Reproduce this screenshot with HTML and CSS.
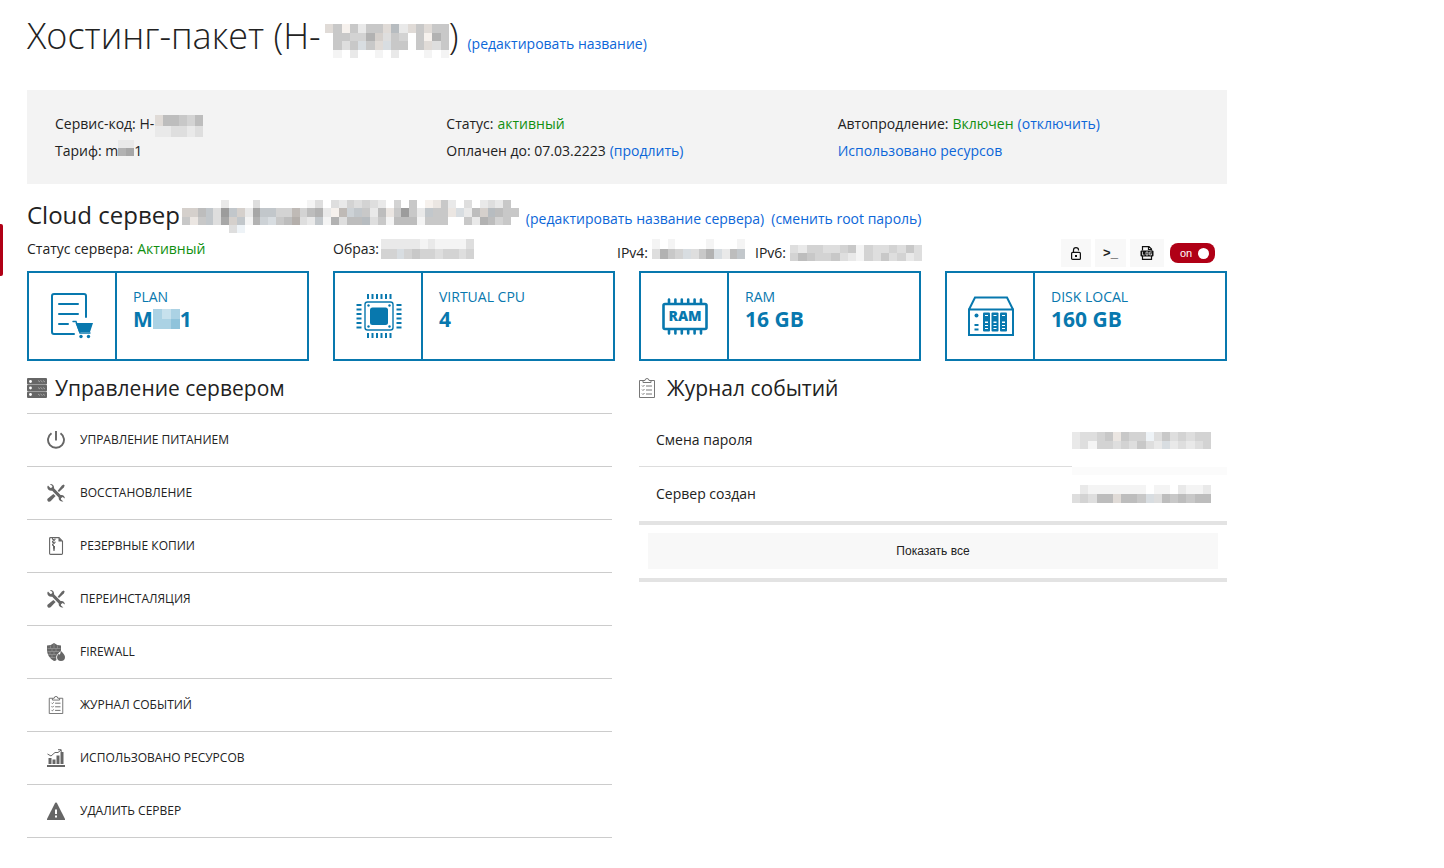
FILE: index.html
```html
<!DOCTYPE html>
<html lang="ru">
<head>
<meta charset="utf-8">
<title>Хостинг-пакет</title>
<link rel="stylesheet" href="styles.css">
</head>
<body>
<svg class="sprite" aria-hidden="true">
  <symbol id="tools" viewBox="0 0 18 18">
    <path d="M1 1.6 3.4 4 5 3.4 5.4 2 3 .2C5 -.3 7.500 1.200 7 4.300L13.600 11C16 10.400 18 12.200 17.900 14.600L15.600 13 14 14.200 14 15.600 16.400 17.400C14 18.200 11.200 16.300 11.700 13.400L5.200 6.700C2.500 7.300.2 5.200.3 2.800Z"/>
    <path d="M16.600.4 17.700 1.500 16.800 3.500 12 8 10.700 6.700 14.900 1.500Z"/>
    <path d="M6.400 9.900 8.600 12.100 3.600 17.300Q2.200 18.300.9 17.200-.3 15.900.8 14.600Z"/>
  </symbol>
  <symbol id="clipboard" viewBox="0 0 16 20">
    <g fill="none" stroke="currentColor" stroke-width="1">
      <path d="M4 2.500H.5V19.500H15.500V2.500H12"/>
      <path d="M4 4.500V2.500H6Q6 .5 8 .5T10 2.500H12V4.500Z"/>
      <path d="M7 8H13M7 12H13M7 16H13M3 7.500 4 8.500 5.500 7M3 11.500 4 12.500 5.500 11M3 15.500 4 16.500 5.500 15"/>
    </g>
  </symbol>
</svg>

<div class="side-tab"></div>

<main class="page">
  <header class="title">
    <h1 class="title-text">Хостинг-пакет (H-<span class="mosaic mosaic-title" data-cells="d5b5255dG2d5d55/055447e35405b75/0535D5dD5505d35/010200102000101"></span>)</h1>
    <a class="link" href="#">(редактировать название)</a>
  </header>

  <section class="info">
    <div>
      <p class="info-line">Сервис-код: H-<span class="mosaic mosaic-code" data-cells="d66546/223323"></span></p>
      <p class="info-line">Тариф: m<span class="mosaic mosaic-tariff" data-cells="22/78"></span>1</p>
    </div>
    <div>
      <p class="info-line">Статус: <span class="good">активный</span></p>
      <p class="info-line">Оплачен до: 07.03.2223 <a class="link" href="#">(продлить)</a></p>
    </div>
    <div>
      <p class="info-line">Автопродление: <span class="good">Включен</span> <a class="link" href="#">(отключить)</a></p>
      <p class="info-line"><a class="link" href="#">Использовано ресурсов</a></p>
    </div>
  </section>

  <section class="server-head">
    <h2 class="server-name">Cloud сервер <span class="mosaic mosaic-server" data-cells="0000020003000000130324343204050bc520302325/ee6F39Fe28FF44g4672bgEF526c5952F55cD26eG655/5c5F38eF17ED56h32F17366G351666155500527645/0000003B"></span></h2>
    <a class="link" href="#">(редактировать название сервера)</a>
    <a class="link" href="#">(сменить root пароль)</a>
  </section>

  <section class="status">
    <p class="status-state">Статус сервера: <span class="good">Активный</span></p>
    <p class="status-image">Образ: <span class="mosaic mosaic-image" data-cells="222221211113/44D454434434"></span></p>
    <p class="status-ip">IPv4: <span class="mosaic mosaic-ip4" data-cells="101000010001/3754D357D26F"></span></p>
    <p class="status-ip">IPv6: <span class="mosaic mosaic-ip6" data-cells="3244334514334353/4654453214353423"></span></p>
    <div class="actions">
      <button class="tool" type="button" aria-label="Доступ">
        <svg viewBox="0 0 10 13" width="10" height="13"><g fill="none" stroke="#111" stroke-width="1.200"><rect x=".6" y="5.400" width="8.800" height="7" rx="1"/><path d="M2.500 5.400V3Q2.500.6 5 .6T7.500 2.800V3.500"/></g><rect x="4" y="8" width="2" height="2" fill="#111"/></svg>
      </button>
      <button class="tool tool-console" type="button">&gt;_</button>
      <button class="tool tool-log" type="button" aria-label="Журнал">
        <svg viewBox="0 0 14 14" width="14" height="14"><path d="M2.500 4.500V.6H9L11.500 3V4.500M8.500.6V3.500H11.500M2.500 10V13.400H11.500V10" fill="none" stroke="#111" stroke-width="1.200"/><rect x=".5" y="4.500" width="13" height="6" rx="1" fill="#111"/><path d="M2.500 5.700V9H4.500M6 6H8V9H6ZM11.800 6H9.700V9H11.500V7.700H10.700" fill="none" stroke="#fff" stroke-width=".7"/></svg>
      </button>
      <label class="toggle"><input class="toggle-input" type="checkbox" checked><span>on</span><span class="toggle-knob"></span></label>
    </div>
  </section>

  <section class="cards">
    <article class="card">
      <div class="card-icon">
        <svg viewBox="0 0 46 46" width="46" height="46"><g fill="none" stroke="currentColor" stroke-width="2" stroke-linecap="round"><path d="M24 41H4Q2 41 2 39V3Q2 1 4 1H34Q36 1 36 3V24"/><path d="M9 11H28M9 21H28M9 31H18"/><path d="M23 28.500H26L30 40H40" stroke-width="1.400"/></g><path d="M25.500 30H43L40 39H29Z" fill="currentColor"/><circle cx="31" cy="43.500" r="1.700" fill="currentColor"/><circle cx="38.500" cy="43.500" r="1.700" fill="currentColor"/></svg>
      </div>
      <div class="card-body"><p class="card-label">PLAN</p><p class="card-value">M<span class="mosaic mosaic-plan" data-tone="blue" data-cells="323/334"></span>1</p></div>
    </article>
    <article class="card">
      <div class="card-icon">
        <svg viewBox="0 0 46 46" width="46" height="46"><g fill="none" stroke="currentColor"><path stroke-width="5" stroke-dasharray="2 2.500" d="M11 3.500H36M11 42.500H36M3 11V36M43 11V36"/><rect x="9" y="9" width="28" height="28" rx="2.500" stroke-width="1.400"/></g><rect x="14" y="14.500" width="18" height="17.500" rx="2.500" fill="currentColor"/><g fill="currentColor"><circle cx="12.500" cy="12.500" r="1.200"/><circle cx="33.500" cy="12.500" r="1.200"/><circle cx="12.500" cy="33.500" r="1.200"/><circle cx="33.500" cy="33.500" r="1.200"/></g></svg>
      </div>
      <div class="card-body"><p class="card-label">VIRTUAL CPU</p><p class="card-value">4</p></div>
    </article>
    <article class="card">
      <div class="card-icon">
        <svg viewBox="0 0 46 46" width="46" height="46"><g fill="none" stroke="currentColor"><rect x="1.500" y="11" width="43" height="25" rx="1.500" stroke-width="2.600"/><path stroke-width="2.600" stroke-linecap="round" d="M7 6.500V10M13.400 6.500V10M19.800 6.500V10M26.200 6.500V10M32.600 6.500V10M39 6.500V10M7 37V40.500M13.400 37V40.500M19.800 37V40.500M26.200 37V40.500M32.600 37V40.500M39 37V40.500"/></g><text class="ram-text" x="23" y="28" text-anchor="middle">RAM</text></svg>
      </div>
      <div class="card-body"><p class="card-label">RAM</p><p class="card-value">16 GB</p></div>
    </article>
    <article class="card">
      <div class="card-icon">
        <svg viewBox="0 0 46 46" width="46" height="46"><g fill="none" stroke="currentColor" stroke-width="2"><path d="M1 16.500H45V42H1ZM1 16.500 7 4.500H39L45 16.500"/></g><g fill="currentColor"><circle cx="8.500" cy="22.500" r="2"/><rect x="6.500" y="31" width="4" height="2"/><rect x="6.500" y="35.500" width="4" height="2"/><rect x="15" y="19.500" width="7" height="19" rx="1"/><rect x="23.500" y="19.500" width="7" height="19" rx="1"/><rect x="32" y="19.500" width="7" height="19" rx="1"/></g><g fill="#fff"><path d="M17 22H20V23H17ZM25.500 22H28.500V23H25.500ZM34 22H37V23H34ZM17 28.500H20V30H17ZM25.500 28.500H28.500V30H25.500ZM34 28.500H37V30H34ZM17 32H20V33H17ZM25.500 32H28.500V33H25.500ZM34 32H37V33H34ZM17 35H20V36H17ZM25.500 35H28.500V36H25.500ZM34 35H37V36H34Z"/></g></svg>
      </div>
      <div class="card-body"><p class="card-label">DISK LOCAL</p><p class="card-value">160 GB</p></div>
    </article>
  </section>

  <div class="columns">
    <section>
      <h2 class="section-title">
        <svg viewBox="0 0 20 20" width="20" height="20"><g fill="#666"><rect width="20" height="6.400" rx="1"/><rect y="6.800" width="20" height="6.400" rx="1"/><rect y="13.600" width="20" height="6.400" rx="1"/></g><g fill="#fff"><circle cx="3.500" cy="3.500" r="1.400"/><circle cx="3.500" cy="10" r="1.400"/><circle cx="3.500" cy="16.500" r="1.400"/></g><path d="M11 2.500 13 4M13.500 2.500 15.500 4M16 2.500 18 4M11 9.500 13 11M13.500 9.500 15.500 11M16 9.500 18 11M11 16 13 17.500M13.500 16 15.500 17.500M16 16 18 17.500" stroke="#bbb" stroke-width=".7"/></svg>
        Управление сервером
      </h2>
      <ul class="menu">
        <li><a class="menu-link" href="#"><svg width="18" height="18" viewBox="0 0 18 18"><path d="M4.500 2.200A8 8 0 1 0 13.500 2.200M9 0V9.500" fill="none" stroke="currentColor" stroke-width="1.900"/></svg>Управление питанием</a></li>
        <li><a class="menu-link" href="#"><svg width="18" height="18" fill="currentColor"><use href="#tools"/></svg>Восстановление</a></li>
        <li><a class="menu-link" href="#"><svg width="18" height="18" viewBox="0 0 18 18"><path d="M2.600 1.500Q2.600.6 3.500.6H12L15.500 4.200V16.500Q15.500 17.400 14.600 17.400H3.500Q2.600 17.400 2.600 16.500Z" fill="none" stroke="currentColor" stroke-width="1.100"/><path d="M11.500.6V4.500H15.500Z" fill="currentColor"/><path d="M5.500 1V2.500H7V4H5.500V5.500H7V7H5.500V8.500H7M8 1.500V3H6.500M8 4.500V6H6.500" fill="none" stroke="currentColor" stroke-width="1"/><path d="M6 9H8V11L7.500 14H6.500L6 11Z" fill="currentColor"/></svg>Резервные копии</a></li>
        <li><a class="menu-link" href="#"><svg width="18" height="18" fill="currentColor"><use href="#tools"/></svg>Переинсталяция</a></li>
        <li><a class="menu-link" href="#"><svg width="18" height="18" viewBox="0 0 18 18" fill="currentColor"><path d="M0 2.500Q4 2.500 7 0 10 2.500 14 2.500V7.500Q10.500 11 9.300 13 9 15.500 9.500 17Q8.500 18 7 18 0 14 0 7Z"/><path d="M13.500 7.500Q18 11.500 18 14 18 18 14 18T10 14Q10 12 12 10.500L12.500 12Q14 10 13.500 7.500Z"/><path d="M.5 5.500H13.500M.5 8.500H12M1 11.500H9.500M3 14.500H8.500M3.500 2.500V5.500M7 1V5.500M10.500 2.500V5.500M5 5.500V8.500M9 5.500V8.500M3 8.500V11.500M7 8.500V11.500M5 11.500V14.500" stroke="#aaa" stroke-width=".5"/></svg>Firewall</a></li>
        <li><a class="menu-link" href="#"><svg width="18" height="18"><use href="#clipboard"/></svg>Журнал событий</a></li>
        <li><a class="menu-link" href="#"><svg width="18" height="18" viewBox="0 0 18 18" fill="currentColor"><path d="M0 16H18V18H0ZM1.500 9H4.500V15H1.500ZM5.500 10.500H8.500V15H5.500ZM9.500 6.500H12.500V15H9.500ZM13.500 3H16.500V15H13.500Z"/><path d="M.5 5 4 7 8 3.500H11L14 1M11 .7H14.200V3" fill="none" stroke="currentColor" stroke-width="1"/></svg>Использовано ресурсов</a></li>
        <li><a class="menu-link" href="#"><svg width="18" height="18" viewBox="0 0 18 18"><path d="M8.200.8Q9 0 9.800.8L18 17V18H0V17Z" fill="currentColor"/><path d="M8 7.500H10V12H8ZM8 13.500H10V15.500H8Z" fill="#fff"/></svg>Удалить сервер</a></li>
      </ul>
    </section>

    <section>
      <h2 class="section-title section-title-log">
        <svg class="ico-log" width="16" height="20"><use href="#clipboard"/></svg>
        Журнал событий
      </h2>
      <table class="events">
        <tbody>
          <tr><td class="event-name event-first">Смена пароля</td><td class="event-date"><span class="mosaic mosaic-date" data-cells="23345c544B3534344/23144343532D23234"></span></td></tr>
          <tr><td class="event-name">Сервер создан</td><td class="event-date event-smudge"><span class="mosaic mosaic-date-tall" data-cells="02111111101102112/34366d665D3656566"></span></td></tr>
        </tbody>
      </table>
      <div class="events-more"><button class="more" type="button">Показать все</button></div>
    </section>
  </div>
</main>
<script src="script.js"></script>
</body>
</html>
```
FILE: styles.css
```css
* {
  box-sizing: border-box;
}

body {
  margin: 0;
  background: #fff;
  color: #222;
  font: 14px/20px "Open Sans", "Noto Sans", sans-serif;
}

h1,
h2,
p,
ul {
  margin: 0;
  padding: 0;
  font-weight: 400;
}

button {
  border: 0;
  padding: 0;
  background: #f8f8f8;
  color: #222;
}

.sprite {
  display: none;
}

.side-tab {
  position: fixed;
  left: 0;
  top: 224px;
  width: 3px;
  height: 52px;
  background: #b00016;
  border-radius: 0 2px 2px 0;
}

.page {
  max-width: 1227px;
  padding-left: 27px;
}

.link {
  color: #0c66d8;
  text-decoration: none;
}

.good {
  color: #0f8f0f;
}

.mosaic {
  display: inline-block;
  vertical-align: middle;
}

.mosaic svg {
  display: block;
  width: 100%;
  height: 100%;
}

.title {
  display: flex;
  align-items: baseline;
  gap: 9px;
  padding: 10px 0 28px;
}

.title-text {
  display: flex;
  align-items: center;
  font-size: 36px;
  line-height: 52px;
  font-weight: 300;
}

.mosaic-title {
  width: 124px;
  height: 34px;
  margin: 10px 0 0 4px;
}

.info {
  display: grid;
  grid-template-columns: repeat(3, 1fr);
  gap: 2px;
  padding: 20px 0 20px 28px;
  background: #f3f3f3;
}

.info-line {
  display: flex;
  align-items: center;
  gap: 0 4px;
  line-height: 27px;
}

.mosaic-code {
  width: 48px;
  height: 22px;
  margin: 5px 0 0 -3px;
}

.mosaic-tariff {
  width: 16px;
  height: 16px;
  margin: 0 -4px 6px;
}

.server-head {
  display: flex;
  align-items: baseline;
  gap: 7px;
  padding-top: 13px;
}

.server-name {
  display: flex;
  align-items: center;
  gap: 2px;
  font-size: 24px;
  line-height: 36px;
}

.mosaic-server {
  width: 337px;
  height: 33px;
  margin-top: 3px;
}

.status {
  display: flex;
  align-items: center;
  padding: 6px 12px 4px 0;
}

.status p {
  display: flex;
  align-items: center;
  gap: 4px;
}

.status-state {
  width: 306px;
}

.status-image {
  width: 284px;
}

.status .status-state,
.status .status-image {
  align-self: flex-start;
}

.status .status-ip {
  margin-right: 10px;
}

.mosaic-image {
  width: 93px;
  height: 20px;
  margin-left: -2px;
}

.mosaic-ip4 {
  width: 93px;
  height: 20px;
  margin-bottom: 8px;
}

.mosaic-ip6 {
  width: 132px;
  height: 16px;
}

.actions {
  display: flex;
  align-items: center;
  gap: 4px;
  margin-left: auto;
}

.tool {
  display: grid;
  place-items: center;
  width: 30px;
  height: 28px;
}

.tool-console {
  width: 31px;
  font: 700 13px/20px "Liberation Sans", Arial, sans-serif;
}

.tool-log {
  width: 34px;
}

.toggle {
  display: flex;
  align-items: center;
  justify-content: space-between;
  width: 45px;
  height: 20px;
  margin-left: 2px;
  padding: 0 6px 0 10px;
  border-radius: 8px;
  background: #b00016;
  color: #fff;
  font: 11px/20px "Liberation Sans", Arial, sans-serif;
}

.toggle-input {
  position: absolute;
  opacity: 0;
}

.toggle-knob {
  width: 11px;
  height: 11px;
  border-radius: 50%;
  background: #fff;
}

.cards {
  display: grid;
  grid-template-columns: repeat(4, 1fr);
  gap: 24px;
  color: #0878ae;
}

.card {
  display: flex;
  height: 90px;
  border: 2px solid #0878ae;
}

.card-icon {
  display: grid;
  place-items: center;
  width: 88px;
  padding-left: 2px;
  border-right: 2px solid #0878ae;
}

.card-body {
  padding: 14px 16px;
}

.card-value {
  display: flex;
  align-items: center;
  font-size: 21px;
  line-height: 24px;
  font-weight: 700;
}

.mosaic-plan {
  width: 27px;
  height: 20px;
}

.ram-text {
  fill: currentColor;
  font: 800 14px "Open Sans", sans-serif;
}

.columns {
  display: grid;
  grid-template-columns: 1fr 1fr;
  gap: 24px;
}

.section-title {
  display: flex;
  align-items: center;
  gap: 8px;
  height: 52px;
  padding-top: 2px;
  font-size: 21px;
  line-height: 30px;
}

.section-title-log {
  gap: 12px;
}

.ico-log {
  color: #777;
}

.menu {
  margin-right: 3px;
  border-top: 1px solid #ccc;
  list-style: none;
}

.menu-link {
  display: flex;
  align-items: center;
  gap: 15px;
  height: 53px;
  padding-left: 20px;
  border-bottom: 1px solid #ccc;
  color: #222;
  font-size: 12px;
  text-decoration: none;
  text-transform: uppercase;
}

.menu-link svg {
  color: #666;
}

.events {
  width: 100%;
  border-collapse: separate;
  border-spacing: 0;
}

.events td {
  height: 54px;
  padding: 0;
}

.events .event-name {
  padding-left: 17px;
}

.events .event-first {
  border-bottom: 1px solid #ddd;
}

.event-date {
  width: 155px;
}

.event-smudge {
  background: linear-gradient(#fbfbfb, #fbfbfb) 0 0 / 100% 8px no-repeat;
}

.event-date .mosaic {
  display: block;
}

.mosaic-date {
  width: 139px;
  height: 17px;
}

.mosaic-date-tall {
  width: 139px;
  height: 18px;
}

.events-more {
  padding: 8px 9px 9px;
  border: solid #e3e3e3;
  border-width: 4px 0;
}

.more {
  display: block;
  width: 100%;
  height: 36px;
  font: 12px/20px "Liberation Sans", Arial, sans-serif;
}
```
FILE: script.js
```js
// Masked values: each character is a cell. 0-9 is a neutral shade,
// a-j a warm one, A-J a cool one; "/" starts a new row.
function shade(ch, tone) {
  let tint = 0;
  let n = parseInt(ch, 10);
  if (Number.isNaN(n)) {
    const code = ch.charCodeAt(0);
    tint = code >= 97 ? 1 : -1;
    n = code - (code >= 97 ? 97 : 65);
  }
  if (n === 0) return null;
  const v = 255 - n * 11;
  if (tone === "blue") return `rgb(${255 - n * 28}, ${255 - n * 15}, ${255 - n * 9})`;
  if (tint > 0) return `rgb(${v + 2}, ${v - 3}, ${v - 7})`;
  if (tint < 0) return `rgb(${v - 6}, ${v - 1}, ${v + 3})`;
  return `rgb(${v}, ${v}, ${v})`;
}

document.querySelectorAll(".mosaic").forEach((el) => {
  const rows = el.dataset.cells.split("/");
  const cols = Math.max(...rows.map((r) => r.length));
  let out = "";
  rows.forEach((row, y) => {
    [...row].forEach((ch, x) => {
      const fill = shade(ch, el.dataset.tone);
      if (fill) out += `<rect x="${x}" y="${y}" width="1" height="1" fill="${fill}"/>`;
    });
  });
  el.innerHTML = `<svg viewBox="0 0 ${cols} ${rows.length}" preserveAspectRatio="none" shape-rendering="crispEdges">${out}</svg>`;
});
```
